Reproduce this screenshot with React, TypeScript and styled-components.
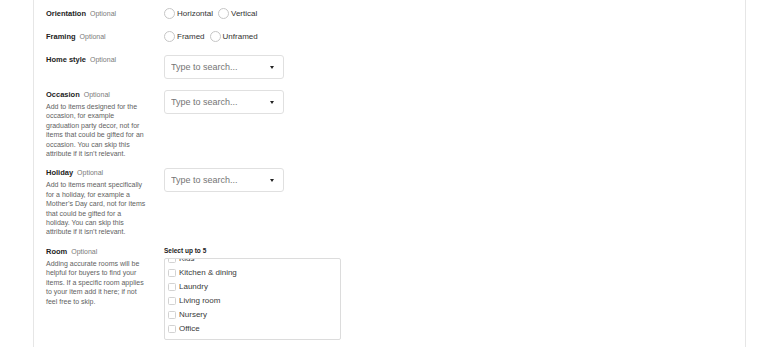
import React from "react";
import styled, { createGlobalStyle } from "styled-components";

const GlobalStyle = createGlobalStyle`
  html, body {
    margin: 0;
    padding: 0;
    background: #ffffff;
  }
  body {
    font-family: "Liberation Sans", Arial, sans-serif;
    color: #222222;
  }
`;

const Page = styled.div`
  padding-left: 33px;
`;

const Card = styled.div`
  width: 713px;
  min-height: 100vh;
  box-sizing: border-box;
  border-left: 1px solid #e6e6e6;
  border-right: 1px solid #e6e6e6;
  padding: 7px 0 0 12px;
`;

const Row = styled.div<{ $mb: number; $center?: boolean }>`
  display: grid;
  grid-template-columns: 118px 1fr;
  align-items: ${(p) => (p.$center ? "center" : "start")};
  margin-bottom: ${(p) => p.$mb}px;
`;

const LabelLine = styled.div`
  font-size: 7.5px;
  line-height: 10px;
  font-weight: 700;
  color: #222222;
  white-space: nowrap;
`;

const Optional = styled.span`
  font-weight: 400;
  font-size: 7px;
  color: #7a7a7a;
  margin-left: 4px;
`;

const Desc = styled.p`
  margin: 2px 0 0;
  width: 100px;
  font-size: 7px;
  line-height: 9.4px;
  color: #616161;
`;

const RadioGroup = styled.div`
  display: flex;
  align-items: center;
  gap: 5px;
  height: 13px;
`;

const RadioOption = styled.label`
  display: flex;
  align-items: center;
  gap: 2px;
  font-size: 8px;
  color: #333333;
`;

const Radio = styled.input`
  appearance: none;
  margin: 0;
  width: 11px;
  height: 11px;
  box-sizing: border-box;
  border: 1px solid #c6c6c6;
  border-radius: 50%;
  background: #ffffff;
`;

const SelectBox = styled.div`
  width: 120px;
  height: 24px;
  box-sizing: border-box;
  border: 1px solid #e0e0e0;
  border-radius: 3px;
  display: flex;
  align-items: center;
  justify-content: space-between;
  padding: 0 9px 0 6px;
  background: #ffffff;
`;

const SearchInput = styled.input`
  border: none;
  outline: none;
  padding: 0;
  width: 90px;
  font-family: "Liberation Sans", Arial, sans-serif;
  font-size: 9px;
  color: #222222;
  background: transparent;

  &::placeholder {
    color: #757575;
  }
`;

const Caret = styled.span`
  width: 0;
  height: 0;
  border-left: 2.5px solid transparent;
  border-right: 2.5px solid transparent;
  border-top: 3px solid #222222;
`;

const SelectHint = styled.div`
  font-size: 6.5px;
  font-weight: 700;
  line-height: 8px;
  margin-bottom: 3px;
  color: #222222;
`;

const CheckList = styled.div`
  width: 177px;
  height: 82px;
  box-sizing: border-box;
  border: 1px solid #dcdcdc;
  border-radius: 2px;
  overflow-y: auto;
  padding: 4px 0 3px 3px;
  scrollbar-width: none;

  &::-webkit-scrollbar {
    display: none;
  }
`;

const CheckItem = styled.label`
  display: flex;
  align-items: center;
  gap: 3px;
  height: 14px;
  font-size: 8px;
  color: #3a3a3a;
`;

const Checkbox = styled.input`
  appearance: none;
  margin: 0;
  width: 8px;
  height: 8px;
  box-sizing: border-box;
  border: 1px solid #d2d2d2;
  border-radius: 1.5px;
  background: #ffffff;
`;

const rooms = [
  "Bathroom",
  "Bedroom",
  "Dorm",
  "Entryway",
  "Game room",
  "Home office",
  "Kids",
  "Kitchen & dining",
  "Laundry",
  "Living room",
  "Nursery",
  "Office",
];

function Label({ name }: { name: string }) {
  return (
    <LabelLine>
      {name}
      <Optional>Optional</Optional>
    </LabelLine>
  );
}

function SearchSelect() {
  return (
    <SelectBox>
      <SearchInput placeholder="Type to search..." />
      <Caret />
    </SelectBox>
  );
}

function RadioPair({ name, options }: { name: string; options: string[] }) {
  return (
    <RadioGroup>
      {options.map((o) => (
        <RadioOption key={o}>
          <Radio type="radio" name={name} />
          {o}
        </RadioOption>
      ))}
    </RadioGroup>
  );
}

export default function App() {
  const listRef = React.useRef<HTMLDivElement>(null);

  // the room list is shown scrolled down to its end
  React.useLayoutEffect(() => {
    if (listRef.current) {
      listRef.current.scrollTop = listRef.current.scrollHeight;
    }
  }, []);

  return (
    <Page>
      <GlobalStyle />
      <Card>
        <Row $mb={10} $center>
          <Label name="Orientation" />
          <RadioPair name="orientation" options={["Horizontal", "Vertical"]} />
        </Row>
        <Row $mb={12} $center>
          <Label name="Framing" />
          <RadioPair name="framing" options={["Framed", "Unframed"]} />
        </Row>
        <Row $mb={11}>
          <Label name="Home style" />
          <SearchSelect />
        </Row>
        <Row $mb={10}>
          <div>
            <Label name="Occasion" />
            <Desc>
              Add to items designed for the occasion, for example graduation party decor, not for
              items that could be gifted for an occasion. You can skip this attribute if it isn’t
              relevant.
            </Desc>
          </div>
          <SearchSelect />
        </Row>
        <Row $mb={10}>
          <div>
            <Label name="Holiday" />
            <Desc>
              Add to items meant specifically for a holiday, for example a Mother’s Day card, not
              for items that could be gifted for a holiday. You can skip this attribute if it isn’t
              relevant.
            </Desc>
          </div>
          <SearchSelect />
        </Row>
        <Row $mb={0}>
          <div>
            <Label name="Room" />
            <Desc>
              Adding accurate rooms will be helpful for buyers to find your items. If a specific
              room applies to your item add it here; if not feel free to skip.
            </Desc>
          </div>
          <div>
            <SelectHint>Select up to 5</SelectHint>
            <CheckList ref={listRef}>
              {rooms.map((r) => (
                <CheckItem key={r}>
                  <Checkbox type="checkbox" />
                  {r}
                </CheckItem>
              ))}
            </CheckList>
          </div>
        </Row>
      </Card>
    </Page>
  );
}
